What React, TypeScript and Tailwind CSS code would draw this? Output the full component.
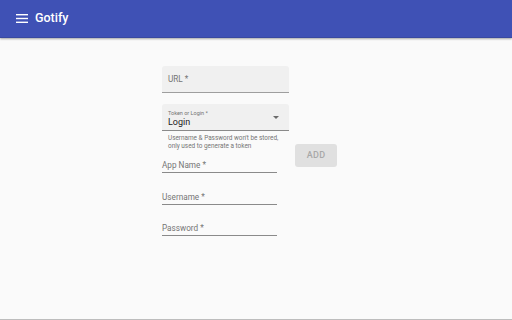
import React from "react";

function Line({ label, top }: { label: string; top: string }) {
  return (
    <div className={`w-[115px] ${top} border-b border-[#8a8a8a] pb-[2px]`}>
      <div className="text-[8.2px] leading-[10px] text-[#757575]">{label}</div>
    </div>
  );
}

export default function App() {
  return (
    <div className="w-[512px] h-[320px] bg-[#fafafa] flex flex-col overflow-hidden font-['Roboto',sans-serif]">
      <header className="h-[38px] shrink-0 bg-[#3f51b5] flex items-center pl-[16px] gap-[7px] shadow-[0_1px_2px_rgba(0,0,0,0.35)] border-b border-[#3949a0]">
        <svg width="12" height="9" viewBox="0 0 12 9" className="shrink-0">
          <rect x="0" y="0" width="12" height="1.4" fill="#fff" />
          <rect x="0" y="3.8" width="12" height="1.4" fill="#fff" />
          <rect x="0" y="7.6" width="12" height="1.4" fill="#fff" />
        </svg>
        <span className="text-white text-[12.5px] font-medium leading-none">Gotify</span>
      </header>
      <main className="flex-1 flex pl-[162px] pt-[28px] gap-[6px]">
        <div className="w-[127px] flex flex-col">
          <div className="h-[27px] bg-[#f0f0f0] rounded-t-[3px] border-b border-[#9e9e9e] flex items-center pl-[6px]">
            <span className="text-[8.2px] text-[#757575] leading-none">URL *</span>
          </div>
          <div className="mt-[11px] h-[27px] bg-[#f0f0f0] rounded-t-[3px] border-b border-[#8a8a8a] flex items-center pl-[6px] pr-[10px]">
            <div className="flex-1 flex flex-col pt-[3px]">
              <span className="text-[5.5px] text-[#757575] leading-[7px]">Token or Login *</span>
              <span className="text-[9px] text-[#212121] leading-[11px]">Login</span>
            </div>
            <svg width="6" height="3" viewBox="0 0 6 3">
              <path d="M0 0 L6 0 L3 3 Z" fill="#6b6b6b" />
            </svg>
          </div>
          <div className="pl-[6px] pt-[3px] text-[6.4px] leading-[8px] text-[#757575]">
            <div>Username &amp; Password won't be stored,</div>
            <div>only used to generate a token</div>
          </div>
          <Line label="App Name *" top="mt-[10px]" />
          <Line label="Username *" top="mt-[19px]" />
          <Line label="Password *" top="mt-[18px]" />
        </div>
        <div className="mt-[78px]">
          <div className="w-[42px] h-[23px] rounded-[3px] bg-[#e0e0e0] flex items-center justify-center text-[9px] font-medium text-[#a8a8a8] tracking-[0.3px]">
            ADD
          </div>
        </div>
      </main>
      <div className="h-[1px] shrink-0 bg-[#bdbdbd]" />
    </div>
  );
}
